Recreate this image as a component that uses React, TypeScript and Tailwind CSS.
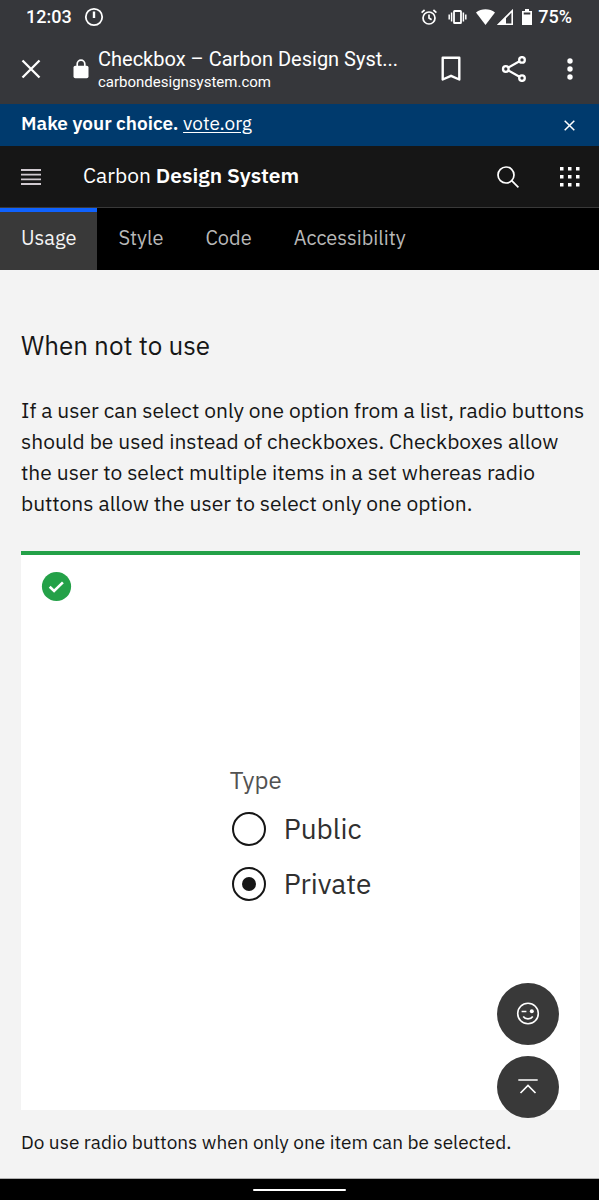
import { useState } from "react";

function StatusBar() {
  return (
    <div className="flex h-[34px] items-center pl-[26px] pr-[27px] text-[18px] font-medium leading-[20px] text-white">
      <span>12:03</span>
      <svg className="ml-3 size-5" viewBox="0 0 20 20" fill="none" stroke="currentColor" strokeWidth="1.8" aria-hidden="true">
        <circle cx="10" cy="10" r="8.2" />
        <path d="M10 4.5v6.5" strokeWidth="2.4" />
      </svg>
      <div className="ml-auto flex items-center">
        <svg className="mr-[11px] size-4" viewBox="0 0 16 16" fill="none" stroke="currentColor" strokeWidth="1.7" aria-hidden="true">
          <circle cx="8" cy="9" r="6" />
          <path d="M8 5.5V9l2.6 1.7M.6 3.6 3.6 1M15.4 3.6 12.4 1" />
        </svg>
        <svg className="mr-[9px] h-4 w-[19px]" viewBox="0 0 19 16" fill="none" stroke="currentColor" strokeWidth="1.5" aria-hidden="true">
          <rect x="6" y="2" width="7" height="12" rx=".6" strokeWidth="1.8" />
          <path d="M3.6 3.6v8.8M1.2 5.5v5M15.4 3.6v8.8M17.8 5.5v5" />
        </svg>
        <svg className="mr-[2px] h-4 w-[19px]" viewBox="0 0 19 16" fill="currentColor" aria-hidden="true">
          <path d="M9.5 16 0 3.4C5.4-.9 13.6-.9 19 3.4Z" />
        </svg>
        <svg className="mr-[9px] size-4" viewBox="0 0 16 16" aria-hidden="true">
          <path d="M1.8 15.2H15.2V1.8Z" fill="none" stroke="currentColor" strokeWidth="1.6" />
          <path d="M1 15.5 9 7.5v8Z" fill="currentColor" />
        </svg>
        <svg className="mr-[6px] h-4 w-[10px]" viewBox="0 0 10 16" aria-hidden="true">
          <path d="M3 0h4v2h3v14H0V2h3Z" fill="currentColor" />
          <path d="M1.7 3.5h6.6v2H1.7Z" fill="#36373b" />
        </svg>
        <span>75%</span>
      </div>
    </div>
  );
}

function BrowserBar() {
  return (
    <div className="flex h-[70px] items-center pb-px pl-[21px] pr-[20px] text-white">
      <button type="button" aria-label="Close tab" className="flex size-5 shrink-0 items-center justify-center">
        <svg className="size-5" viewBox="0 0 20 20" fill="none" stroke="currentColor" strokeWidth="2.3" aria-hidden="true">
          <path d="m1.5 1.5 17 17M18.5 1.5l-17 17" />
        </svg>
      </button>
      <svg className="ml-8 h-5 w-4 shrink-0" viewBox="0 0 16 20" aria-hidden="true">
        <path d="M4.2 8V5a3.8 3.8 0 0 1 7.6 0v3" fill="none" stroke="currentColor" strokeWidth="1.7" />
        <rect x=".5" y="6.8" width="15" height="12.4" rx="1.8" fill="currentColor" />
      </svg>
      <div className="ml-[9px] min-w-0 flex-1 pt-px">
        <p className="truncate text-[20px] leading-[26px]">Checkbox – Carbon Design Syst...</p>
        <p className="truncate text-[15px] leading-[20px]">carbondesignsystem.com</p>
      </div>
      <div className="ml-4 flex shrink-0 items-center">
        <button type="button" aria-label="Bookmark">
          <svg className="h-[26px] w-5" viewBox="0 0 20 26" fill="none" stroke="currentColor" strokeWidth="2.4" strokeLinejoin="round" aria-hidden="true">
            <path d="M1.7 1.7h16.6v21.8L10 19.8l-8.3 3.7Z" />
          </svg>
        </button>
        <button type="button" aria-label="Share" className="ml-10">
          <svg className="size-[26px]" viewBox="0 0 26 26" fill="none" stroke="currentColor" strokeWidth="2.3" aria-hidden="true">
            <circle cx="4.8" cy="13" r="2.8" />
            <circle cx="21" cy="3.9" r="2.8" />
            <circle cx="21" cy="22.1" r="2.8" />
            <path d="M7.3 11.6 18.5 5.3M7.3 14.4l11.2 6.3" />
          </svg>
        </button>
        <button type="button" aria-label="More options" className="ml-[34px]">
          <svg className="h-6 w-[18px]" viewBox="0 0 18 24" fill="currentColor" aria-hidden="true">
            <circle cx="9" cy="4" r="2.7" />
            <circle cx="9" cy="12" r="2.7" />
            <circle cx="9" cy="20" r="2.7" />
          </svg>
        </button>
      </div>
    </div>
  );
}

const tabs = ["Usage", "Style", "Code", "Accessibility"];

export default function App() {
  const [type, setType] = useState("Private");
  const [tab, setTab] = useState("Usage");

  return (
    <div className="flex min-h-screen flex-col bg-[#f3f3f3] font-['IBM_Plex_Sans','Noto_Sans',sans-serif] text-[#161616]">
      <div className="bg-[#36373b] font-[Roboto,sans-serif]">
        <StatusBar />
        <BrowserBar />
      </div>

      <div className="flex h-[42px] items-center justify-between bg-[#003a6d] pb-[3px] pl-[21px] pr-[23px] text-[19px] text-white">
        <p>
          <strong className="font-semibold">Make your choice.</strong>{" "}
          <a href="https://vote.org" className="underline underline-offset-2">vote.org</a>
        </p>
        <button type="button" aria-label="Dismiss banner">
          <svg className="size-[14px]" viewBox="0 0 14 14" fill="none" stroke="currentColor" strokeWidth="1.5" aria-hidden="true">
            <path d="m2.700 3.700 9.600 9.600M12.300 3.700l-9.600 9.600" />
          </svg>
        </button>
      </div>

      <header className="flex h-[62px] items-center border-b border-[#393939] bg-[#161616] pl-[21px] pr-[19px] text-white">
        <button type="button" aria-label="Open menu">
          <svg className="h-4 w-5" viewBox="0 0 20 16" fill="#d0cad0" aria-hidden="true">
            <path d="M0 0h20v1.9H0zM0 4.7h20v1.9H0zM0 9.4h20v1.9H0zM0 14.1h20v1.9H0z" />
          </svg>
        </button>
        <a href="#" className="ml-[42px] pb-[2px] text-[21px]">
          Carbon <span className="font-semibold">Design System</span>
        </a>
        <button type="button" aria-label="Search" className="ml-auto">
          <svg className="size-[22px]" viewBox="0 0 22 22" fill="none" stroke="currentColor" strokeWidth="1.7" aria-hidden="true">
            <circle cx="9" cy="9" r="8" />
            <path d="m14.7 14.7 6.7 6.7" />
          </svg>
        </button>
        <button type="button" aria-label="App switcher" className="ml-[41px]">
          <svg className="size-5" viewBox="0 0 20 20" fill="currentColor" aria-hidden="true">
            <path d="M0 0h3.5v3.5H0zM8 0h3.5v3.5H8zM16 0h3.5v3.5H16zM0 8h3.5v3.5H0zM8 8h3.5v3.5H8zM16 8h3.5v3.5H16zM0 16h3.5v3.5H0zM8 16h3.5v3.5H8zM16 16h3.5v3.5H16z" />
          </svg>
        </button>
      </header>

      <nav className="flex h-[62px] bg-black text-[20px]">
        {tabs.map((t) => (
          <button
            key={t}
            type="button"
            onClick={() => setTab(t)}
            className={
              t === tab
                ? "border-t-4 border-[#0f62fe] bg-[#393939] px-[21px] pb-[6px] text-[#f4f4f4]"
                : "border-t-4 border-transparent px-[21px] pb-[6px] text-[#b8b8b8]"
            }
          >
            {t}
          </button>
        ))}
      </nav>

      <main className="flex-1 pb-[19px] pl-[21px] pr-[19px] pt-[57px]">
        <h1 className="text-[26px] leading-[36px]">When not to use</h1>
        <p className="-mr-2 mt-8 text-[21px] leading-[31px]">
          If a user can select only one option from a list, radio buttons should be used instead of checkboxes.
          Checkboxes allow the user to select multiple items in a set whereas radio buttons allow the user to select
          only one option.
        </p>
        <figure className="mt-8">
          <div className="flex aspect-square flex-col border-t-4 border-[#24a148] bg-white px-5 pb-5 pt-4">
            <svg className="size-[31px]" viewBox="0 0 31 31" aria-label="Do" role="img">
              <circle cx="15.5" cy="15.5" r="14.6" fill="#24a148" />
              <path d="m8.7 15.7 4.4 4.3 8.8-8.6" fill="none" stroke="#fff" strokeWidth="2.6" />
            </svg>
            <div className="mb-[19px] flex flex-1 items-center justify-center">
              <fieldset>
                <legend className="mb-[3px] text-[24px] leading-[36px] text-[#525252]">Type</legend>
                {["Public", "Private"].map((o) => (
                  <label key={o} className="flex h-[55px] items-center gap-[18px] text-[28px] text-[#303030]">
                    <input
                      type="radio"
                      name="type"
                      value={o}
                      checked={type === o}
                      onChange={() => setType(o)}
                      className="ml-[2px] flex size-[34px] appearance-none items-center justify-center rounded-full border-2 border-[#161616] before:size-[14px] before:rounded-full checked:before:bg-[#161616]"
                    />
                    {o}
                  </label>
                ))}
              </fieldset>
            </div>
          </div>
          <figcaption className="mt-[19px] text-[19px] leading-[26px]">
            Do use radio buttons when only one item can be selected.
          </figcaption>
        </figure>
      </main>

      <div className="fixed bottom-[82px] right-10 flex flex-col gap-[11px] text-white">
        <button type="button" aria-label="Feedback" className="flex size-[62px] items-center justify-center rounded-full bg-[#393939]">
          <svg className="size-6" viewBox="0 0 24 24" fill="none" stroke="currentColor" strokeWidth="1.6" aria-hidden="true">
            <circle cx="12" cy="11.5" r="10.3" />
            <path d="M5.6 9.5h4.8M7.2 14.5c2.2 3.2 7.4 3.2 9.6 0" />
            <circle cx="15.8" cy="9.3" r="2" fill="currentColor" stroke="none" />
          </svg>
        </button>
        <button type="button" aria-label="Back to top" className="flex size-[62px] items-center justify-center rounded-full bg-[#393939]">
          <svg className="size-6" viewBox="0 0 24 24" fill="none" stroke="currentColor" strokeWidth="1.7" aria-hidden="true">
            <path d="M2.3 5h19.4M4.5 18l7.5-7.5 7.5 7.5" />
          </svg>
        </button>
      </div>

      <div className="flex h-[22px] items-center justify-center border-t border-[#b0b0b0] bg-black">
        <div className="h-[2px] w-[93px] rounded-full bg-white" />
      </div>
    </div>
  );
}
